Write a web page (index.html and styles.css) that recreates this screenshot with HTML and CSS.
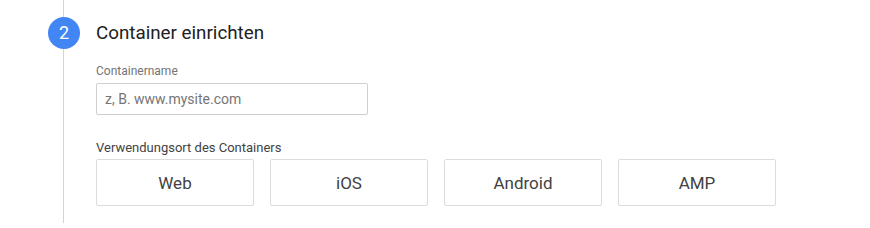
FILE: index.html
```html
<!DOCTYPE html>
<html lang="de">

<head>
	<meta charset="utf-8">
	<title>Container einrichten</title>
	<link rel="stylesheet" href="styles.css">
</head>

<body>
	<div class="step">
		<div class="rail">
			<div class="line line-top"></div>
			<div class="step-number">2</div>
			<div class="line line-bottom"></div>
		</div>
		<div class="step-body">
			<h2 class="step-title">Container einrichten</h2>
			<label class="field-label" for="container-name">Containername</label>
			<input id="container-name" class="text-input" type="text" placeholder="z, B. www.mysite.com">
			<div class="field-label dark">Verwendungsort des Containers</div>
			<div class="platforms">
				<button class="platform">Web</button>
				<button class="platform">iOS</button>
				<button class="platform">Android</button>
				<button class="platform">AMP</button>
			</div>
		</div>
	</div>
</body>

</html>
```

FILE: styles.css
```css
body {
	margin: 0;
	background-color: white;
	font-family: Roboto, "Liberation Sans", sans-serif;
	color: #212121;
}
.step {
	display: flex;
	gap: 16px;
	padding-left: 48px;
	height: 223px;
}
.rail {
	display: flex;
	flex-direction: column;
	width: 32px;
}
.line {
	width: 1px;
	margin-left: 15px;
	background-color: #d4d4d4;
}
.line-top {
	height: 17px;
}
.line-bottom {
	flex: 1;
}
.step-number {
	width: 32px;
	height: 32px;
	border-radius: 50%;
	background-color: #4285f4;
	color: white;
	font-size: 18px;
	line-height: 32px;
	text-align: center;
}
.step-body {
	display: flex;
	flex-direction: column;
	align-items: flex-start;
}
.step-title {
	margin: 0;
	padding-top: 17px;
	font-size: 18.8px;
	font-weight: normal;
	line-height: 32px;
	color: #212121;
}
.field-label {
	margin-top: 14px;
	font-size: 12px;
	line-height: 16px;
	color: #757575;
}
.field-label.dark {
	margin-top: 25px;
	font-size: 13px;
	color: #424242;
}
.text-input {
	box-sizing: border-box;
	width: 272px;
	height: 32px;
	margin-top: 4px;
	padding: 0 8px;
	border: 1px solid #cfcfcf;
	border-radius: 2px;
	font-family: inherit;
	font-size: 14px;
	color: #212121;
}
.text-input::placeholder {
	color: #757575;
}
.platforms {
	display: flex;
	gap: 16px;
	margin-top: 3px;
}
.platform {
	box-sizing: border-box;
	width: 158px;
	height: 47px;
	background-color: white;
	border: 1px solid #dcdcdc;
	border-radius: 2px;
	font-family: inherit;
	font-size: 17px;
	color: #424242;
}
```
